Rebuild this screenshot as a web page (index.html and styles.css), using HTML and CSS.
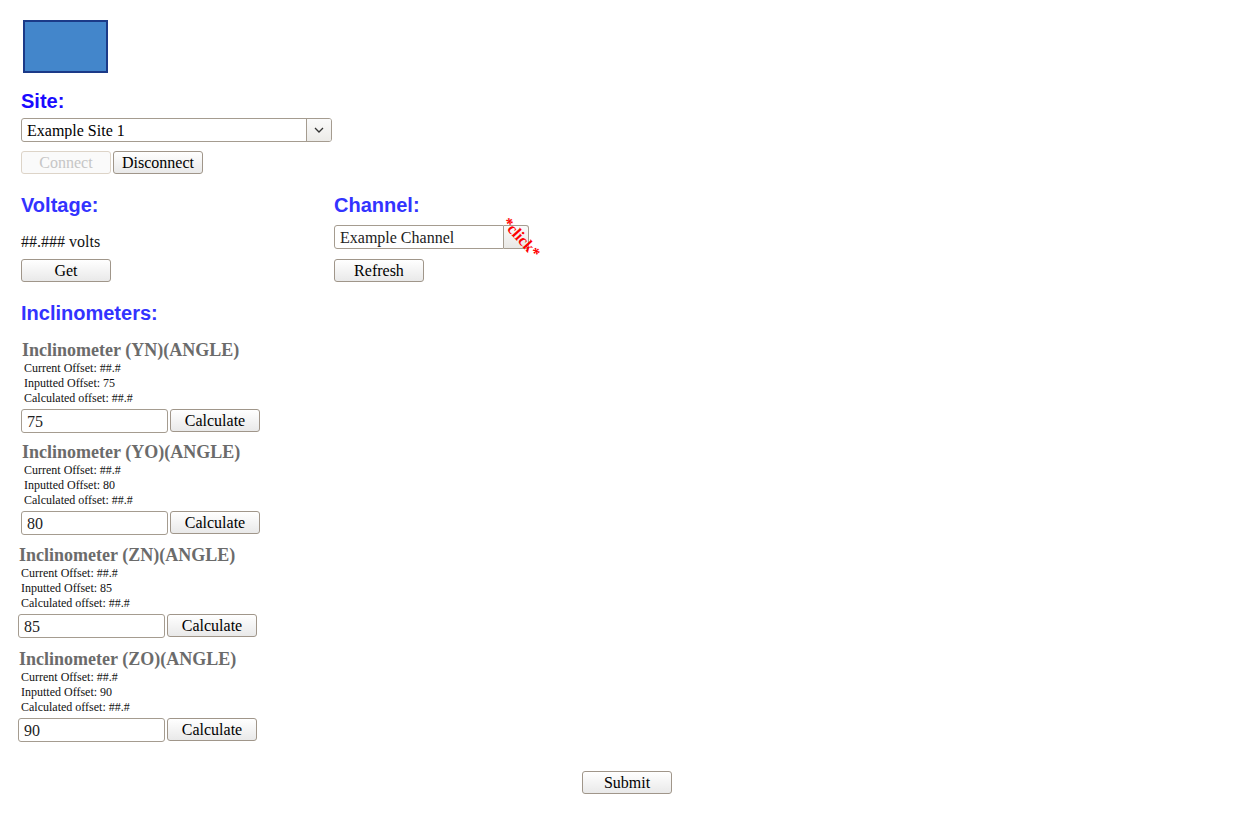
FILE: index.html
```html
<!DOCTYPE html>
<html>
<head>
<meta charset="utf-8">
<link rel="stylesheet" href="styles.css">
</head>
<body>
<div class="page">
  <div class="logo"></div>

  <h2 class="title title-site">Site:</h2>
  <div class="select-wrap">
    <select class="site-select"><option>Example Site 1</option></select>
    <span class="select-arrow"><svg width="10" height="6" viewBox="0 0 10 6"><path d="M1 1 L5 5 L9 1" fill="none" stroke="#333" stroke-width="1.3"/></svg></span>
  </div>
  <div class="btn-row">
    <button class="btn" disabled>Connect</button>
    <button class="btn">Disconnect</button>
  </div>

  <div class="cols">
    <div class="col col-voltage">
      <h2 class="title">Voltage:</h2>
      <div class="volts">##.### volts</div>
      <button class="btn">Get</button>
    </div>
    <div class="col">
      <h2 class="title">Channel:</h2>
      <div class="channel-row">
        <input class="field channel-field" type="text" value="Example Channel">
        <button class="click-btn"><span class="click-text">*click*</span></button>
      </div>
      <button class="btn">Refresh</button>
    </div>
  </div>

  <h2 class="title title-incl">Inclinometers:</h2>

  <div class="incl incl-a">
    <h3 class="incl-head">Inclinometer (YN)(ANGLE)</h3>
    <div class="incl-info">Current Offset: ##.#<br>Inputted Offset: 75<br>Calculated offset: ##.#</div>
    <div class="incl-row"><input class="field incl-field" type="text" value="75"><button class="btn">Calculate</button></div>
  </div>
  <div class="incl incl-b">
    <h3 class="incl-head">Inclinometer (YO)(ANGLE)</h3>
    <div class="incl-info">Current Offset: ##.#<br>Inputted Offset: 80<br>Calculated offset: ##.#</div>
    <div class="incl-row"><input class="field incl-field" type="text" value="80"><button class="btn">Calculate</button></div>
  </div>
  <div class="incl incl-c">
    <h3 class="incl-head">Inclinometer (ZN)(ANGLE)</h3>
    <div class="incl-info">Current Offset: ##.#<br>Inputted Offset: 85<br>Calculated offset: ##.#</div>
    <div class="incl-row"><input class="field incl-field" type="text" value="85"><button class="btn">Calculate</button></div>
  </div>
  <div class="incl incl-d">
    <h3 class="incl-head">Inclinometer (ZO)(ANGLE)</h3>
    <div class="incl-info">Current Offset: ##.#<br>Inputted Offset: 90<br>Calculated offset: ##.#</div>
    <div class="incl-row"><input class="field incl-field" type="text" value="90"><button class="btn">Calculate</button></div>
  </div>

  <div class="submit-row"><button class="btn">Submit</button></div>
</div>
</body>
</html>
```

FILE: styles.css
```css
* { box-sizing: border-box; }
html, body { margin: 0; padding: 0; background: #fff; }
body { font-family: "Liberation Serif", "Times New Roman", serif; color: #000; }

.page { padding: 20px 0 0 21px; width: 1254px; }

.logo {
  width: 85px; height: 53px;
  margin-left: 2px;
  background: #4386cb;
  border: 2px solid #1b3a88;
}

.title {
  font-family: "Liberation Sans", Arial, sans-serif;
  font-weight: bold;
  font-size: 20px;
  line-height: 23px;
  color: #3333ff;
  margin: 0;
}
.title-site { color: #1a0aff; margin-top: 17px; }

.select-wrap {
  display: flex;
  width: 311px; height: 24px;
  margin-top: 5px;
  border: 1px solid #a59c90;
  border-radius: 3px;
  background: #fff;
}
.site-select {
  flex: 1;
  appearance: none; -webkit-appearance: none;
  border: none; outline: none; background: transparent;
  font-family: "Liberation Serif", "Times New Roman", serif;
  font-size: 16px;
  padding: 0 0 0 5px;
  height: 22px;
  color: #000;
}
.select-arrow {
  width: 25px;
  display: flex; align-items: center; justify-content: center;
  border-left: 1px solid #a59c90;
  background: linear-gradient(#fafafa, #ecebe8);
  border-radius: 0 2px 2px 0;
}

.btn-row { display: flex; gap: 2px; margin-top: 9px; }

.btn {
  width: 90px; height: 23px;
  padding: 0;
  font-family: "Liberation Serif", "Times New Roman", serif;
  font-size: 16px;
  color: #000;
  border: 1px solid #a0968a;
  border-radius: 3px;
  background: linear-gradient(#ffffff, #e9e9e9);
  line-height: 21px;
}
.btn:disabled {
  color: #c6c6c6;
  border-color: #ddd4c8;
  background: #fafafa;
}

.cols { display: flex; margin-top: 20px; }
.col { display: flex; flex-direction: column; align-items: flex-start; }
.col-voltage { width: 313px; }

.volts {
  height: 32px;
  font-size: 16px;
  line-height: 16px;
  padding-top: 17px;
  color: #111;
}
.col-voltage .btn { margin-top: 10px; }

.channel-row { display: flex; margin-top: 8px; margin-bottom: 10px; }
.field {
  height: 24px;
  border: 1px solid #a59c90;
  border-radius: 3px;
  font-family: "Liberation Serif", "Times New Roman", serif;
  font-size: 16px;
  color: #222;
  padding: 1px 0 0 5px;
  background: #fff;
  outline: none;
}
.channel-field { width: 170px; border-radius: 3px 0 0 3px; }
.click-btn {
  width: 25px; height: 24px;
  padding: 0;
  border: 1px solid #a59c90; border-left: none;
  border-radius: 0 3px 3px 0;
  background: linear-gradient(#fafafa, #e9e8e5);
  overflow: visible;
  display: flex; align-items: center; justify-content: center;
}
.click-text {
  display: block;
  color: #ff0000;
  font-family: "Liberation Serif", "Times New Roman", serif;
  font-weight: bold;
  font-size: 16px;
  white-space: nowrap;
  transform: translate(5px, 1px) rotate(48deg);
}

.title-incl { margin-top: 20px; }

.incl-head {
  font-size: 18px;
  line-height: 20px;
  font-weight: bold;
  color: #6b6b6b;
  margin: 0 0 0 1px;
}
.incl-info {
  font-size: 12px;
  line-height: 15px;
  margin: 1px 0 0 3px;
  color: #111;
}
.incl-row { display: flex; gap: 2px; margin-top: 3px; }
.incl-field { width: 147px; }

.incl-a { margin-top: 15px; }
.incl-b { margin-top: 9px; }
.incl-c { margin-top: 10px; margin-left: -3px; }
.incl-d { margin-top: 11px; margin-left: -3px; }

.submit-row { display: flex; justify-content: center; margin: 29px 0 0 -21px; }
```
